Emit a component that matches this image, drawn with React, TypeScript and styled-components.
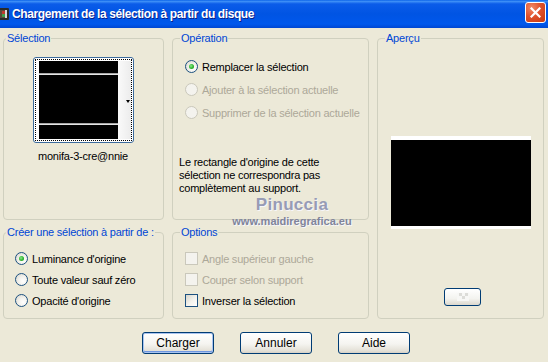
import React from 'react';
import styled, { createGlobalStyle } from 'styled-components';

const GlobalStyle = createGlobalStyle`
  html, body {
    margin: 0;
    padding: 0;
    background: #ece9d8;
  }
`;

const Window = styled.div`
  width: 548px;
  height: 362px;
  display: flex;
  flex-direction: column;
  overflow: hidden;
  background: #ece9d8;
  font-family: "Liberation Sans", Arial, sans-serif;
  font-size: 11px;
  letter-spacing: -0.22px;
  color: #000;
`;

const TitleBar = styled.div`
  height: 28px;
  flex-shrink: 0;
  display: flex;
  align-items: center;
  background: linear-gradient(
    180deg,
    #0a62e8 0%,
    #3d8ff7 5%,
    #0b5ce9 14%,
    #0054e3 50%,
    #0058ec 86%,
    #0047d2 100%
  );
`;

const TitleIcon = styled.svg`
  width: 9px;
  height: 14px;
  flex-shrink: 0;
`;

const TitleText = styled.div`
  flex: 1;
  margin-left: 3px;
  color: #fff;
  font-weight: bold;
  font-size: 12px;
  letter-spacing: -0.4px;
  text-shadow: 1px 1px 0 #0a1e8a;
  white-space: nowrap;
`;

const CloseButton = styled.div`
  width: 21px;
  height: 21px;
  box-sizing: border-box;
  margin: -3px 2px 0 0;
  border: 1px solid #fff;
  border-radius: 3px;
  display: flex;
  align-items: center;
  justify-content: center;
  background: radial-gradient(circle at 30% 25%, #f08a68 0%, #e0522d 45%, #c5380f 100%);
`;

const Body = styled.div`
  display: grid;
  grid-template-columns: 161px 197px 167px;
  grid-template-rows: 188px 93px;
  gap: 6px 8px;
  padding: 4px 0 0 3px;
`;

const Group = styled.fieldset<{ $span?: boolean }>`
  margin: 0;
  padding: 0;
  min-width: 0;
  border: 1px solid #d0d0bf;
  border-radius: 4px;
  grid-row: ${p => (p.$span ? '1 / 3' : 'auto')};
  grid-column: ${p => (p.$span ? '3' : 'auto')};
  display: flex;
  flex-direction: column;
`;

const Legend = styled.legend<{ $offset: number }>`
  margin-left: ${p => p.$offset}px;
  padding: 0 1px;
  line-height: 13px;
  color: #0046d5;
`;

const SelectionBody = styled.div`
  display: flex;
  flex-direction: column;
  align-items: center;
  padding: 12px 1px 0 0;
`;

const Thumb = styled.div`
  width: 101px;
  height: 86px;
  box-sizing: border-box;
  border: 1px solid #3c6b9c;
  border-radius: 3px;
  padding: 1px;
  background: #fff;
`;

const FocusRect = styled.div`
  height: 100%;
  box-sizing: border-box;
  border: 1px dotted #000;
  display: flex;
  padding: 1px 0 1px 3px;
`;

const ThumbImage = styled.div`
  width: 79px;
  background: linear-gradient(
    180deg,
    #000 0 12px,
    #a8a8a8 12px 13px,
    #e4e4e4 13px 14px,
    #000 14px 62px,
    #a8a8a8 62px 63px,
    #e4e4e4 63px 64px,
    #000 64px
  );
`;

const ThumbStrip = styled.div`
  flex: 1;
  display: flex;
  align-items: center;
  justify-content: flex-end;
  padding-right: 1px;
  background: linear-gradient(90deg, #fafafa, #ececec);
`;

const Arrow = styled.span`
  width: 0;
  height: 0;
  border-left: 2.5px solid transparent;
  border-right: 2.5px solid transparent;
  border-top: 3px solid #000;
  margin-top: 2px;
`;

const ThumbName = styled.div`
  margin-top: 7px;
  line-height: 13px;
`;

const OptionList = styled.div<{ $top: number; $left: number }>`
  display: flex;
  flex-direction: column;
  padding: ${p => p.$top}px 0 0 ${p => p.$left}px;
`;

const OptionRow = styled.div<{ $height: number; $disabled?: boolean }>`
  height: ${p => p.$height}px;
  display: flex;
  align-items: center;
  gap: 4px;
  color: ${p => (p.$disabled ? '#aca899' : '#000')};
  white-space: nowrap;
`;

const RadioCircle = styled.span<{ $disabled?: boolean }>`
  width: 13px;
  height: 13px;
  box-sizing: border-box;
  flex-shrink: 0;
  border-radius: 50%;
  border: 1px solid ${p => (p.$disabled ? '#cac8bb' : '#1c5180')};
  background: ${p =>
    p.$disabled
      ? '#f4f3ee'
      : 'radial-gradient(circle at 65% 65%, #ffffff 0%, #f2f1ec 45%, #d4d2c8 100%)'};
  display: flex;
  align-items: center;
  justify-content: center;
`;

const RadioDot = styled.span`
  width: 5px;
  height: 5px;
  border-radius: 50%;
  background: radial-gradient(circle at 40% 40%, #8ee88e 0%, #2db52d 55%, #1a8f1a 100%);
`;

const CheckBox = styled.span<{ $disabled?: boolean }>`
  width: 13px;
  height: 13px;
  box-sizing: border-box;
  flex-shrink: 0;
  border: 1px solid ${p => (p.$disabled ? '#cac8bb' : '#1c5180')};
  background: ${p =>
    p.$disabled ? '#f4f3ee' : 'linear-gradient(135deg, #d8d6cc 0%, #f4f3ee 55%, #ffffff 100%)'};
`;

const Note = styled.p`
  margin: 32px 0 0 6px;
  line-height: 13px;
`;

const PreviewBody = styled.div`
  display: flex;
  flex-direction: column;
  align-items: center;
  padding: 91px 0 0 0;
`;

const Preview = styled.div`
  width: 140px;
  height: 93px;
  box-sizing: border-box;
  background: #000;
  border-top: 4px solid #fff;
  border-bottom: 3px solid #fff;
`;

const SmallButton = styled.div`
  width: 37px;
  height: 18px;
  box-sizing: border-box;
  margin: 59px 0 0 4px;
  border: 1px solid #003c74;
  border-radius: 3px;
  background: linear-gradient(180deg, #ffffff 0%, #f3f3ef 60%, #dcd8cd 100%);
  display: flex;
  align-items: center;
  justify-content: center;
`;

const ButtonRow = styled.div`
  display: flex;
  gap: 26px;
  padding: 13px 0 0 142px;
`;

const Button = styled.div<{ $default?: boolean }>`
  width: 72px;
  height: 22px;
  box-sizing: border-box;
  border: 1px solid #003c74;
  border-radius: 3px;
  background: linear-gradient(180deg, #ffffff 0%, #f5f4f0 55%, #e3e0d6 90%, #d6d0c5 100%);
  box-shadow: ${p => (p.$default ? 'inset 0 0 0 1px #a9c4f0, inset 0 -1px 0 1px #6e96e0' : 'none')};
  display: flex;
  align-items: center;
  justify-content: center;
  font-size: 12px;
  letter-spacing: 0;
`;

const Watermark = styled.div`
  position: absolute;
  left: 228px;
  top: 194px;
  width: 128px;
  display: flex;
  flex-direction: column;
  align-items: center;
  pointer-events: none;
  font-family: "Liberation Sans", Arial, sans-serif;
`;

const WatermarkName = styled.div`
  font-size: 17px;
  font-weight: bold;
  letter-spacing: 0.3px;
  line-height: 21px;
  color: #979bb5;
  text-shadow: 1px 1px 0 #f6f6fa;
`;

const WatermarkUrl = styled.div`
  font-size: 11px;
  font-weight: bold;
  line-height: 13px;
  color: #80849b;
  text-shadow: 1px 1px 0 #f6f6fa;
`;

const Root = styled.div`
  position: relative;
  width: 548px;
  height: 362px;
`;

type Opt = { label: string; checked?: boolean; disabled?: boolean };

const Radios = ({ items, height, top, left }: { items: Opt[]; height: number; top: number; left: number }) => (
  <OptionList $top={top} $left={left}>
    {items.map(it => (
      <OptionRow key={it.label} $height={height} $disabled={it.disabled}>
        <RadioCircle $disabled={it.disabled}>{it.checked && <RadioDot />}</RadioCircle>
        {it.label}
      </OptionRow>
    ))}
  </OptionList>
);

const Checks = ({ items, height, top, left }: { items: Opt[]; height: number; top: number; left: number }) => (
  <OptionList $top={top} $left={left}>
    {items.map(it => (
      <OptionRow key={it.label} $height={height} $disabled={it.disabled}>
        <CheckBox $disabled={it.disabled} />
        {it.label}
      </OptionRow>
    ))}
  </OptionList>
);

export default function App() {
  return (
    <Root>
      <GlobalStyle />
      <Window>
        <TitleBar>
          <TitleIcon viewBox="7 1 9 14">
            <rect x="0" y="2" width="16" height="12" rx="1" fill="#2a2a2a" />
            <rect x="2" y="4" width="12" height="8" fill="#5a4a3a" />
            <rect x="9" y="5" width="4" height="3" fill="#c0392b" />
            <rect x="9" y="8" width="4" height="3" fill="#3fa04a" />
            <rect x="12" y="4" width="2" height="8" fill="#d9d9d9" />
          </TitleIcon>
          <TitleText>Chargement de la sélection à partir du disque</TitleText>
          <CloseButton>
            <svg width="11" height="11" viewBox="0 0 11 11">
              <path d="M1.5 1.5 L9.5 9.5 M9.5 1.5 L1.5 9.5" stroke="#fff" strokeWidth="2.2" strokeLinecap="square" />
            </svg>
          </CloseButton>
        </TitleBar>

        <Body>
          <Group>
            <Legend $offset={2}>Sélection</Legend>
            <SelectionBody>
              <Thumb>
                <FocusRect>
                  <ThumbImage />
                  <ThumbStrip>
                    <Arrow />
                  </ThumbStrip>
                </FocusRect>
              </Thumb>
              <ThumbName>monifa-3-cre@nnie</ThumbName>
            </SelectionBody>
          </Group>

          <Group>
            <Legend $offset={7}>Opération</Legend>
            <Radios
              top={10}
              left={12}
              height={23}
              items={[
                { label: 'Remplacer la sélection', checked: true },
                { label: 'Ajouter à la sélection actuelle', disabled: true },
                { label: 'Supprimer de la sélection actuelle', disabled: true },
              ]}
            />
            <Note>
              Le rectangle d'origine de cette
              <br />
              sélection ne correspondra pas
              <br />
              complètement au support.
            </Note>
          </Group>

          <Group $span>
            <Legend $offset={7}>Aperçu</Legend>
            <PreviewBody>
              <Preview />
              <SmallButton>
                <svg width="12" height="8" viewBox="0 0 12 8">
                  <rect x="0" y="0" width="12" height="8" fill="#f7f7f5" />
                  <rect x="2" y="0" width="3" height="3" fill="#dcdcd8" />
                  <rect x="8" y="0" width="3" height="3" fill="#dcdcd8" />
                  <rect x="5" y="3" width="3" height="3" fill="#dcdcd8" />
                </svg>
              </SmallButton>
            </PreviewBody>
          </Group>

          <Group>
            <Legend $offset={2}>Créer une sélection à partir de :</Legend>
            <Radios
              top={9}
              left={11}
              height={21}
              items={[
                { label: "Luminance d'origine", checked: true },
                { label: 'Toute valeur sauf zéro' },
                { label: "Opacité d'origine" },
              ]}
            />
          </Group>

          <Group>
            <Legend $offset={7}>Options</Legend>
            <Checks
              top={9}
              left={12}
              height={21}
              items={[
                { label: 'Angle supérieur gauche', disabled: true },
                { label: 'Couper selon support', disabled: true },
                { label: 'Inverser la sélection' },
              ]}
            />
          </Group>
        </Body>

        <ButtonRow>
          <Button $default>Charger</Button>
          <Button>Annuler</Button>
          <Button>Aide</Button>
        </ButtonRow>
      </Window>
      <Watermark>
        <WatermarkName>Pinuccia</WatermarkName>
        <WatermarkUrl>www.maidiregrafica.eu</WatermarkUrl>
      </Watermark>
    </Root>
  );
}
